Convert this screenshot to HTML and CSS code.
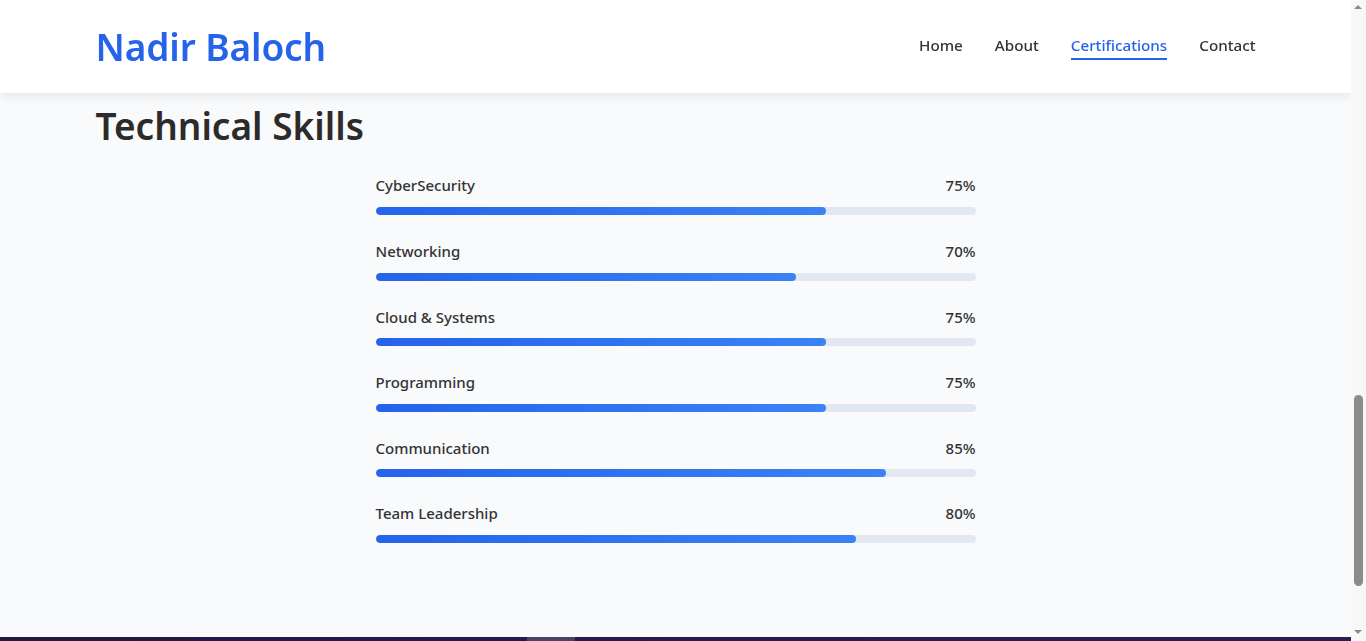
FILE: index.html
```html
<!DOCTYPE html>
<html lang="en">
<head>
<meta charset="utf-8">
<title>Nadir Baloch</title>
<link rel="stylesheet" href="styles.css">
</head>
<body>
<header class="site-header">
  <div class="container header-inner">
    <a class="logo" href="#">Nadir Baloch</a>
    <nav class="nav">
      <a class="nav-link" href="#">Home</a>
      <a class="nav-link" href="#">About</a>
      <a class="nav-link active" href="#">Certifications</a>
      <a class="nav-link" href="#">Contact</a>
    </nav>
  </div>
</header>
<main class="main">
  <section class="skills container">
    <h2 class="section-title">Technical Skills</h2>
    <div class="skill-list">
      <div class="skill">
        <div class="skill-head"><span>CyberSecurity</span><span>75%</span></div>
        <div class="track"><div class="fill" style="width:75%"></div></div>
      </div>
      <div class="skill">
        <div class="skill-head"><span>Networking</span><span>70%</span></div>
        <div class="track"><div class="fill" style="width:70%"></div></div>
      </div>
      <div class="skill">
        <div class="skill-head"><span>Cloud &amp; Systems</span><span>75%</span></div>
        <div class="track"><div class="fill" style="width:75%"></div></div>
      </div>
      <div class="skill">
        <div class="skill-head"><span>Programming</span><span>75%</span></div>
        <div class="track"><div class="fill" style="width:75%"></div></div>
      </div>
      <div class="skill">
        <div class="skill-head"><span>Communication</span><span>85%</span></div>
        <div class="track"><div class="fill" style="width:85%"></div></div>
      </div>
      <div class="skill">
        <div class="skill-head"><span>Team Leadership</span><span>80%</span></div>
        <div class="track"><div class="fill" style="width:80%"></div></div>
      </div>
    </div>
  </section>
</main>
<footer class="footer">
  <div class="footer-row">
    <span class="footer-chip"></span>
  </div>
</footer>
<div class="scrollbar" aria-hidden="true">
  <span class="sb-arrow sb-up"></span>
  <span class="sb-thumb"></span>
  <span class="sb-arrow sb-down"></span>
</div>
</body>
</html>
```
FILE: styles.css
```css
* { box-sizing: border-box; }
body {
  margin: 0 15px 0 0;
  font-family: "Noto Sans", "Open Sans", sans-serif;
  background: #f8fafc;
  color: #333;
}
a { text-decoration: none; }
.container {
  max-width: 1200px;
  margin: 0 auto;
  padding: 0 20px;
}
.site-header {
  position: fixed;
  top: 0; left: 0; right: 15px;
  height: 93px;
  background: #fff;
  box-shadow: 0 2px 10px rgba(0,0,0,0.1);
  z-index: 10;
}
.header-inner {
  height: 100%;
  display: flex;
  align-items: center;
  justify-content: space-between;
}
.logo {
  color: #2563eb;
  font-size: 37px;
  font-weight: 600;
  line-height: 1.2;
  letter-spacing: -0.1px;
  margin-top: 2px;
}
.nav {
  display: flex;
  gap: 32px;
  margin-bottom: 4px;
}
.nav-link {
  position: relative;
  color: #333;
  font-size: 15.2px;
  font-weight: 500;
  line-height: 24px;
}
.nav-link.active { color: #2563eb; }
.nav-link.active::after {
  content: "";
  position: absolute;
  left: 0; right: 0;
  bottom: -3px;
  height: 2px;
  background: #2563eb;
}
.main { padding-top: 104px; }
.section-title {
  margin: 0;
  font-size: 37px;
  font-weight: 600;
  line-height: 1.2;
  color: #2d2a2a;
}
.skill-list {
  max-width: 600px;
  margin: 25px auto 0;
  padding-bottom: 70px;
}
.skill { margin-bottom: 24px; }
.skill-head {
  display: flex;
  justify-content: space-between;
  font-size: 15px;
  font-weight: 500;
  line-height: 25.6px;
  color: #333;
  margin-bottom: 8px;
}
.track {
  height: 8px;
  border-radius: 4px;
  background: #e2e8f0;
  overflow: hidden;
}
.fill {
  height: 100%;
  border-radius: 4px;
  background: linear-gradient(90deg, #2563eb, #3b82f6);
}
.footer {
  background: linear-gradient(90deg, #221a42, #2e1a55);
  height: 160px;
}
.footer-row {
  display: flex;
  padding-left: 527px;
}
.footer-chip {
  width: 48px;
  height: 40px;
  background: rgba(255,255,255,0.18);
}
.scrollbar {
  position: fixed;
  top: 0; right: 0; bottom: 0;
  width: 15px;
  background: #f8f8f8;
  z-index: 20;
}
.sb-arrow {
  position: absolute;
  left: 3px;
  width: 0; height: 0;
  border-left: 4.5px solid transparent;
  border-right: 4.5px solid transparent;
}
.sb-up { top: 5px; border-bottom: 4.5px solid #8a8a8a; }
.sb-down { bottom: 7px; border-top: 4.5px solid #8a8a8a; }
.sb-thumb {
  position: absolute;
  left: 3px;
  top: 395px;
  width: 9px;
  height: 191px;
  border-radius: 5px;
  background: #8b8b8b;
}
```
